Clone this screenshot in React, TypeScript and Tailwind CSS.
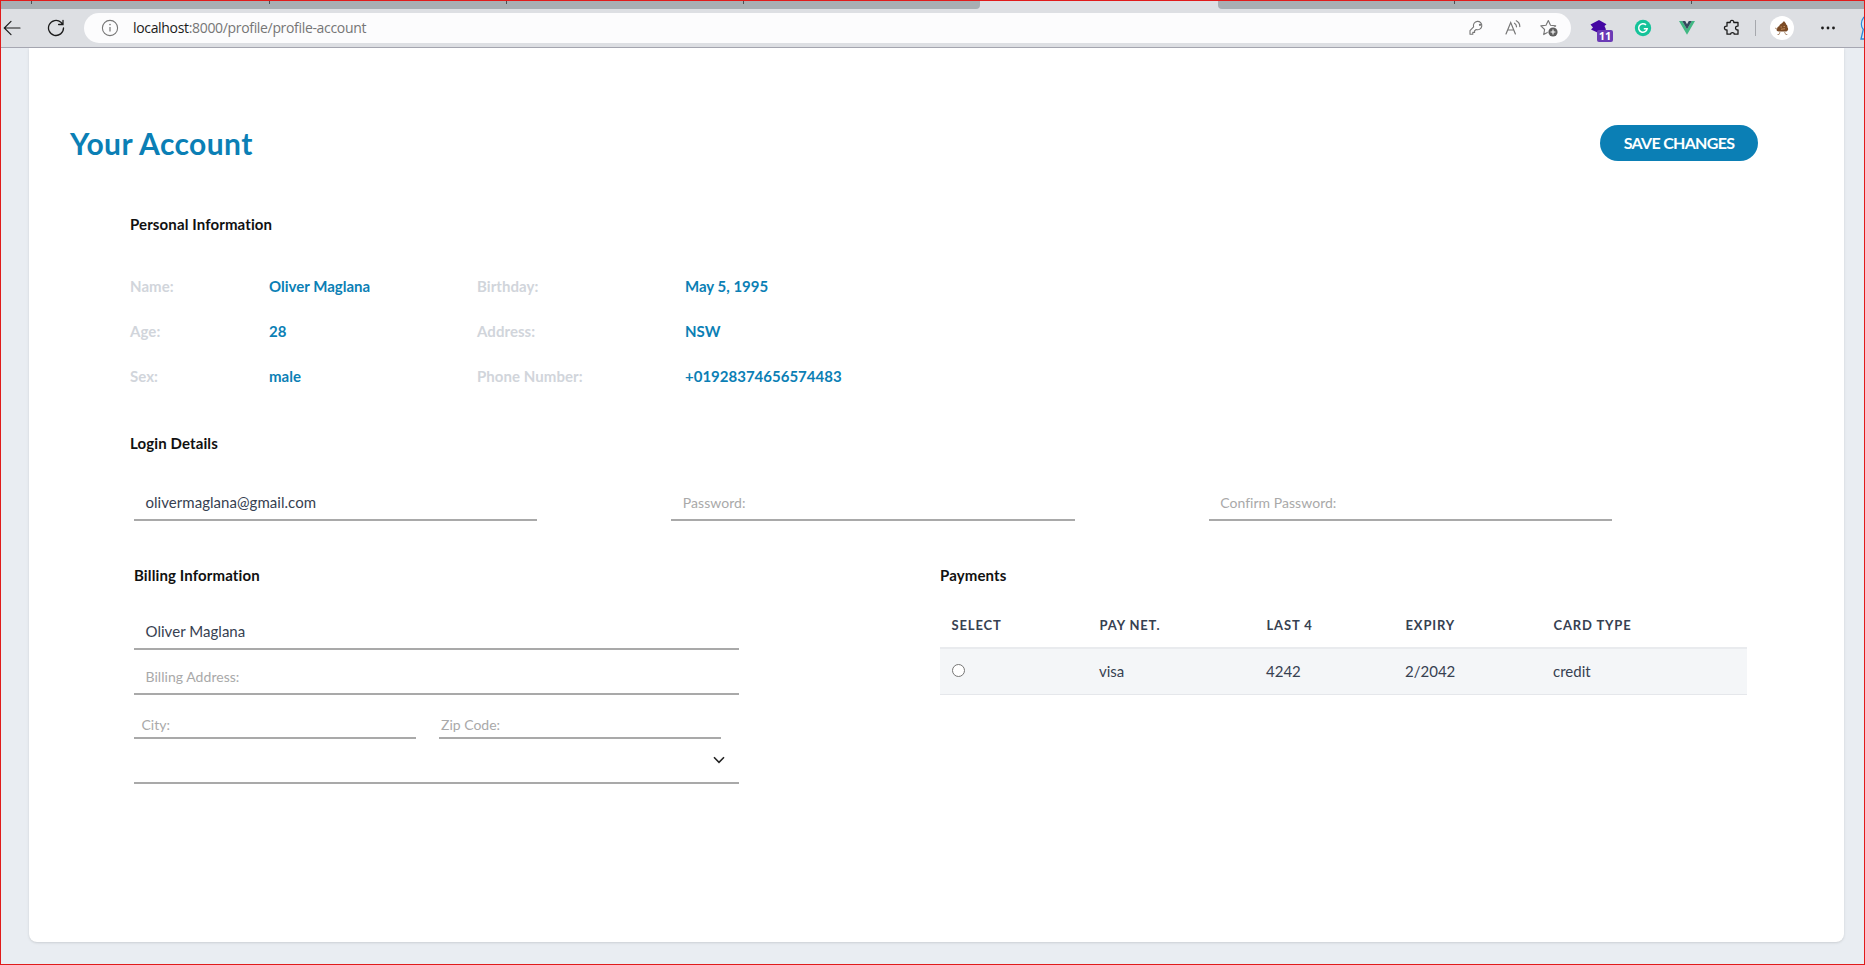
import React from "react";

interface Info {
  label: string;
  value: string;
}

interface Card {
  payNet: string;
  last4: string;
  expiry: string;
  cardType: string;
}

const personalInfo: Info[] = [
  { label: "Name:", value: "Oliver Maglana" },
  { label: "Birthday:", value: "May 5, 1995" },
  { label: "Age:", value: "28" },
  { label: "Address:", value: "NSW" },
  { label: "Sex:", value: "male" },
  { label: "Phone Number:", value: "+01928374656574483" },
];

const cards: Card[] = [
  { payNet: "visa", last4: "4242", expiry: "2/2042", cardType: "credit" },
];

const TabStrip = () => (
  <div className="flex h-2 shrink-0 bg-[#dddfe3]">
    <div className="flex w-[979px] rounded-br bg-[#a8aeb3]">
      <div className="h-[3px] w-[31px] border-r border-[#4b4f54]" />
      <div className="h-[3px] w-[238px] border-r border-[#4b4f54]" />
      <div className="h-[3px] w-[237px] border-r border-[#4b4f54]" />
      <div className="h-[3px] w-[237px] border-r border-[#4b4f54]" />
    </div>
    <div className="w-[238px]" />
    <div className="flex flex-1 rounded-bl bg-[#a8aeb3]">
      <div className="h-[3px] w-[237px] border-r border-[#4b4f54]" />
      <div className="h-[3px] w-[237px] border-r border-[#4b4f54]" />
    </div>
  </div>
);

const AddressBar = () => (
  <div className="flex h-[30px] w-[1487px] shrink-0 items-center rounded-full bg-[#fcfcfd] pl-[17px] pr-[12px]">
    <svg width="18" height="18" viewBox="0 0 18 18" fill="none" stroke="#767676">
      <circle cx="9" cy="9" r="7.6" strokeWidth="1.1" />
      <path d="M9 8v4.6" strokeWidth="1.2" />
      <circle cx="9" cy="5.6" r="0.8" fill="#767676" stroke="none" />
    </svg>
    <p className="ml-[14px] flex-1 font-['Open_Sans','Noto_Sans',sans-serif] text-sm leading-5 tracking-[-0.33px] text-[#767676]">
      <span className="text-[#1b1b1b]">localhost</span>:8000/profile/profile-account
    </p>
    <svg width="18" height="18" viewBox="0 0 18 18" fill="none" stroke="#767676" strokeWidth="1.1" strokeLinejoin="round">
      <path d="M8.200 10.500a4.200 4.200 0 1 0-2.600-2.700L2 11.600v3.600h2.800v-1.800h1.800v-1.600z" />
      <circle cx="12" cy="5.800" r="0.6" fill="#767676" />
    </svg>
    <svg className="ml-[18px]" width="18" height="18" viewBox="0 0 18 18" fill="none" stroke="#767676" strokeWidth="1.2" strokeLinecap="round">
      <path d="M2 15 6.700 3.500 11.400 15M3.700 11h6" />
      <path d="M10.500 4.200c1.300.8 2 2 2 3.600M12.300 1.800c2.200 1.200 3.500 3.300 3.500 5.800" />
    </svg>
    <svg className="ml-[17px]" width="20" height="20" viewBox="0 0 20 20" fill="none">
      <path
        d="M9.300 2.500l2.200 4.700 5.200.7-3.800 3.600.9 5.100-4.500-2.500-4.600 2.500.9-5.100L1.800 7.900l5.200-.7z"
        stroke="#767676"
        strokeWidth="1.1"
        strokeLinejoin="round"
      />
      <circle cx="14" cy="14" r="5.4" fill="#fcfcfd" />
      <circle cx="14" cy="14" r="4.6" fill="#5e5e5e" />
      <path d="M14 11.600v4.800M11.600 14h4.800" stroke="#fff" strokeWidth="1.1" />
    </svg>
  </div>
);

const Extensions = () => (
  <div className="flex flex-1 items-center">
    <div className="relative ml-[19px] h-6 w-6">
      <svg width="24" height="24" viewBox="0 0 24 24" fill="#4406a3">
        <path d="M9 4l7.500 4.300-2 1.600 1.500 3.600-6.500 4L1 13.600l2-2L.5 8.500z" />
      </svg>
      <span className="absolute left-[7px] top-[14px] flex h-3 w-4 items-center justify-center rounded-[2px] bg-[#6b3bb5] font-['Open_Sans',sans-serif] text-[11px] font-bold leading-3 text-white">
        11
      </span>
    </div>
    <svg className="ml-[20px]" width="18" height="18" viewBox="0 0 18 18" fill="none">
      <circle cx="9" cy="9" r="8.2" fill="#15c39a" />
      <path d="M12 5.900A4.300 4.300 0 1 0 13.200 9.700H9.800" stroke="#fff" strokeWidth="1.5" />
    </svg>
    <svg className="ml-[27px]" width="16" height="14" viewBox="0 0 16 14">
      <path d="M0 0h3.200L8 8.300 12.800 0H16L8 13.800z" fill="#41b883" />
      <path d="M3.200 0h3L8 3.200 9.800 0h3L8 8.300z" fill="#35495e" />
    </svg>
    <svg className="ml-[28px]" width="18" height="18" viewBox="0 0 18 18" fill="none" stroke="#1b1b1b" strokeWidth="1.3" strokeLinejoin="round">
      <path d="M4 3.500h3.200c-.4-2.900 4-2.900 3.600 0H15v3.600c-3.300-.7-3.300 4.500 0 3.800v4.300h-3.800c.3-2.200-3.800-2.200-3.500 0H4v-4.300c-3.400.6-3.400-4.300 0-3.800z" />
    </svg>
    <div className="ml-[14px] h-4 w-px bg-[#a6a8ad]" />
    <div className="ml-[14px] flex h-6 w-6 items-center justify-center rounded-full bg-white">
      <svg width="16" height="16" viewBox="0 0 16 16">
        <path d="M10 1c.5 1.200 1.800 1.500 2.200 3.600 1.300.7 1.300 1.800 1.200 2.700 1.300.9 1 4-1.400 4.200H5c-2.500 0-3-1.800-1.800-3 0-1.300.8-2 2-2.300C5.500 4 8.500 3.500 10 1z" fill="#7a4a25" />
        <path d="M6.500 7h1.500M9.500 6.500h1.500M7 9.300l4-.6" stroke="#c08a58" strokeWidth="1" />
        <path d="M6 12l-1 2.500H3.500M10.500 12l1.300 2.500h1.500M3 9L1 8" stroke="#9a7657" strokeWidth="0.8" fill="none" />
      </svg>
    </div>
    <svg className="ml-[27px]" width="14" height="4" viewBox="0 0 14 4" fill="#1b1b1b">
      <circle cx="1.500" cy="2" r="1.4" />
      <circle cx="7" cy="2" r="1.4" />
      <circle cx="12.500" cy="2" r="1.4" />
    </svg>
    <svg className="ml-auto" width="4" height="26" viewBox="0 0 4 26" fill="none">
      <path d="M4 2C1 6 .5 11 3.300 14.500L1 24h3" fill="#cfe6f8" stroke="#2b8ad6" strokeWidth="1.3" />
    </svg>
  </div>
);

const Toolbar = () => (
  <div className="flex h-[39px] shrink-0 items-center border-b border-[#a6a7b2] bg-[#dddfe3]">
    <svg className="ml-[2px]" width="18" height="18" viewBox="0 0 18 18" fill="none" stroke="#1b1b1b" strokeWidth="1.2" strokeLinecap="round">
      <path d="M17 9H1.500M8 2.300L1.300 9 8 15.700" />
    </svg>
    <svg className="ml-[26px]" width="18" height="18" viewBox="0 0 18 18" fill="none" stroke="#1b1b1b" strokeWidth="1.3" strokeLinecap="round">
      <path d="M16.500 9a7.500 7.500 0 1 1-2.600-5.700L16 5.500M16 1.300v4.200h-4.400" />
    </svg>
    <div className="w-[19px]" />
    <AddressBar />
    <Extensions />
  </div>
);

const SectionTitle = ({ children }: { children: React.ReactNode }) => (
  <h2 className="text-[15px] font-bold leading-6 tracking-[0.12px] text-[#111]">{children}</h2>
);

const Field = ({ value, placeholder }: { value?: string; placeholder?: string }) => (
  <div className="h-[31px] w-full border-b-2 border-[#a9a9a9] pl-[11.5px] leading-6">
    {value ? (
      <span className="text-[15px] tracking-[0.04px] text-[#374151]">{value}</span>
    ) : (
      <span className="text-sm leading-6 tracking-[0.04px] text-[#a9a9a9]">{placeholder}</span>
    )}
  </div>
);

const BillingForm = () => (
  <div className="w-[605px]">
    <SectionTitle>Billing Information</SectionTitle>
    <div className="mt-8 flex flex-col gap-[14px]">
      <Field value="Oliver Maglana" />
      <Field placeholder="Billing Address:" />
    </div>
    <div className="mt-[18px] flex gap-[23px] text-sm leading-6 text-[#a9a9a9]">
      <div className="h-[26px] w-[282px] border-b-2 border-[#a9a9a9] pl-[7.5px]">City:</div>
      <div className="h-[26px] w-[282px] border-b-2 border-[#a9a9a9] pl-[2px]">Zip Code:</div>
    </div>
    <div className="flex h-[45px] items-center justify-end border-b-2 border-[#a9a9a9] pb-[2px] pr-[14px]">
      <svg width="12" height="8" viewBox="0 0 12 8" fill="none" stroke="#222" strokeWidth="1.6">
        <path d="M1 1.300l5 5 5-5" />
      </svg>
    </div>
  </div>
);

const Payments = () => (
  <div className="w-[807px]">
    <SectionTitle>Payments</SectionTitle>
    <div className="mt-4 grid h-[46px] grid-cols-[148px_167px_139px_148px_1fr] items-center border-b-2 border-[#e9ebee] pl-[11.5px] pt-[2px] text-[13px] font-bold tracking-[0.85px] text-[#374151]">
      <span>SELECT</span>
      <span>PAY NET.</span>
      <span>LAST 4</span>
      <span>EXPIRY</span>
      <span>CARD TYPE</span>
    </div>
    {cards.map((card, index) => (
      <div
        key={index}
        className="grid h-[46px] grid-cols-[148px_167px_139px_148px_1fr] items-center border-b border-[#e5e7eb] bg-[#f4f6f8] pl-[11px] text-[15px] text-[#374151]"
      >
        <div className="mb-[3px] ml-px h-[13px] w-[13px] rounded-full border border-[#767676] bg-white" />
        <span>{card.payNet}</span>
        <span>{card.last4}</span>
        <span>{card.expiry}</span>
        <span>{card.cardType}</span>
      </div>
    ))}
  </div>
);

const App = () => {
  return (
    <div className="flex h-[965px] w-[1865px] flex-col overflow-hidden border border-[#e01b1b] bg-[#e9edf2] font-['Lato',sans-serif] [font-variant-ligatures:none]">
      <TabStrip />
      <Toolbar />
      <main className="ml-[28px] h-[894px] w-[1815px] rounded-b-lg bg-white pl-[41px] pt-[77px] shadow-sm">
        <div className="flex w-[1688px] items-center justify-between">
          <h1 className="text-[30px] font-bold leading-9 tracking-[0.4px] text-[#0b7fb5]">Your Account</h1>
          <button className="h-9 w-[158px] rounded-full bg-[#0b7fb5] text-base font-bold tracking-[-0.7px] text-white">
            SAVE CHANGES
          </button>
        </div>

        <section className="ml-[60px] mt-[51px]">
          <SectionTitle>Personal Information</SectionTitle>
          <div className="mt-[38px] grid grid-cols-[139px_208px_208px_1fr] gap-y-[21px] text-[15px] font-bold leading-6">
            {personalInfo.map((info) => (
              <React.Fragment key={info.label}>
                <span className="tracking-[0.06px] text-[#d1d5db]">{info.label}</span>
                <span className="text-[#0b7fb5]">{info.value}</span>
              </React.Fragment>
            ))}
          </div>
        </section>

        <section className="ml-[60px] mt-[43px]">
          <SectionTitle>Login Details</SectionTitle>
          <div className="ml-1 mt-[35px] grid w-[1478px] grid-cols-3 gap-x-[134px]">
            <Field value="olivermaglana@gmail.com" />
            <Field placeholder="Password:" />
            <Field placeholder="Confirm Password:" />
          </div>
        </section>

        <section className="ml-[64px] mt-[42px] flex gap-[201px]">
          <BillingForm />
          <Payments />
        </section>
      </main>
    </div>
  );
};

export default App;
